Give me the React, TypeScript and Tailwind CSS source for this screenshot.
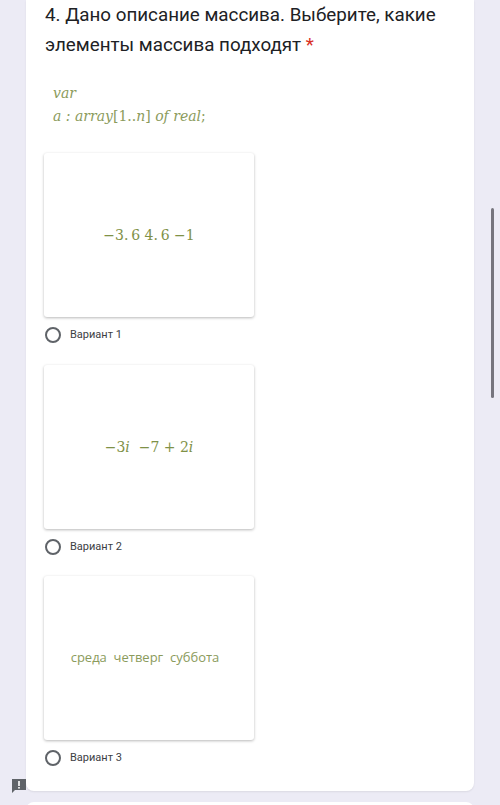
import React from "react";

function Radio({ label }: { label: string }) {
  return (
    <div className="flex items-center h-[18px] mt-[9px]">
      <div className="w-[16px] h-[16px] rounded-full border-2 border-[#5f6368] ml-[1px]" />
      <span className="ml-[9px] text-[11px] text-[#3c4043]" style={{ fontFamily: "Roboto, sans-serif" }}>{label}</span>
    </div>
  );
}

function Box({ children }: { children: React.ReactNode }) {
  return (
    <div className="w-[210px] h-[164px] bg-white rounded-[3px] shadow-[0_1px_3px_rgba(0,0,0,0.28)] flex items-center justify-center">
      {children}
    </div>
  );
}

export default function App() {
  const serif = { fontFamily: '"DejaVu Serif", "Liberation Serif", serif' };
  return (
    <div className="relative h-[805px] overflow-hidden bg-[#ecebf5]">
      <div className="mx-[26px] bg-white rounded-b-[8px] pl-[18px] pr-[20px] pb-[24px] shadow-[0_1px_2px_rgba(0,0,0,0.08)]">
        <div className="text-[18.8px] leading-[30px] text-[#202124] pl-[1px]" style={{ fontFamily: "Roboto, sans-serif" }}>
          4. Дано описание массива. Выберите, какие элементы массива подходят <span className="text-[#d93025]">*</span>
        </div>
        <div className="mt-[22px] ml-[9px] text-[14px] leading-[23px] text-[#8b9b5c] italic" style={serif}>
          <div>var</div>
          <div className="whitespace-pre">
            a : array<span className="not-italic">[1..</span>n<span className="not-italic">]</span> of real<span className="not-italic">;</span>
          </div>
        </div>
        <div className="mt-[25px]">
          <Box>
            <span className="text-[14px] text-[#7f9147] whitespace-pre" style={serif}>−3.&thinsp;6 4.&thinsp;6 −1</span>
          </Box>
          <Radio label="Вариант 1" />
        </div>
        <div className="mt-[21px]">
          <Box>
            <span className="text-[14px] text-[#7f9147] whitespace-pre" style={serif}>
              −3<i>i</i>  −7 + 2<i>i</i>
            </span>
          </Box>
          <Radio label="Вариант 2" />
        </div>
        <div className="mt-[20px]">
          <Box>
            <span className="text-[13px] text-[#8b9b5c] whitespace-pre pr-[8px]" style={{ fontFamily: '"Open Sans", sans-serif' }}>
              среда  четверг  суббота
            </span>
          </Box>
          <Radio label="Вариант 3" />
        </div>
      </div>
      <div className="mx-[26px] mt-[11px] h-[40px] bg-white rounded-t-[8px]" />
      <div className="absolute left-[491px] top-[208px] w-[3px] h-[190px] rounded-full bg-[#76757e]" />
      <div className="absolute left-[11px] top-[778px] w-[16px] h-[16px]">
        <svg width="16" height="16" viewBox="0 0 16 16">
          <path d="M1 1h14v11H4l-3 3z" fill="#5f6368" />
          <rect x="7.2" y="3" width="1.6" height="5" fill="#fff" />
          <rect x="7.2" y="9" width="1.6" height="1.6" fill="#fff" />
        </svg>
      </div>
    </div>
  );
}
